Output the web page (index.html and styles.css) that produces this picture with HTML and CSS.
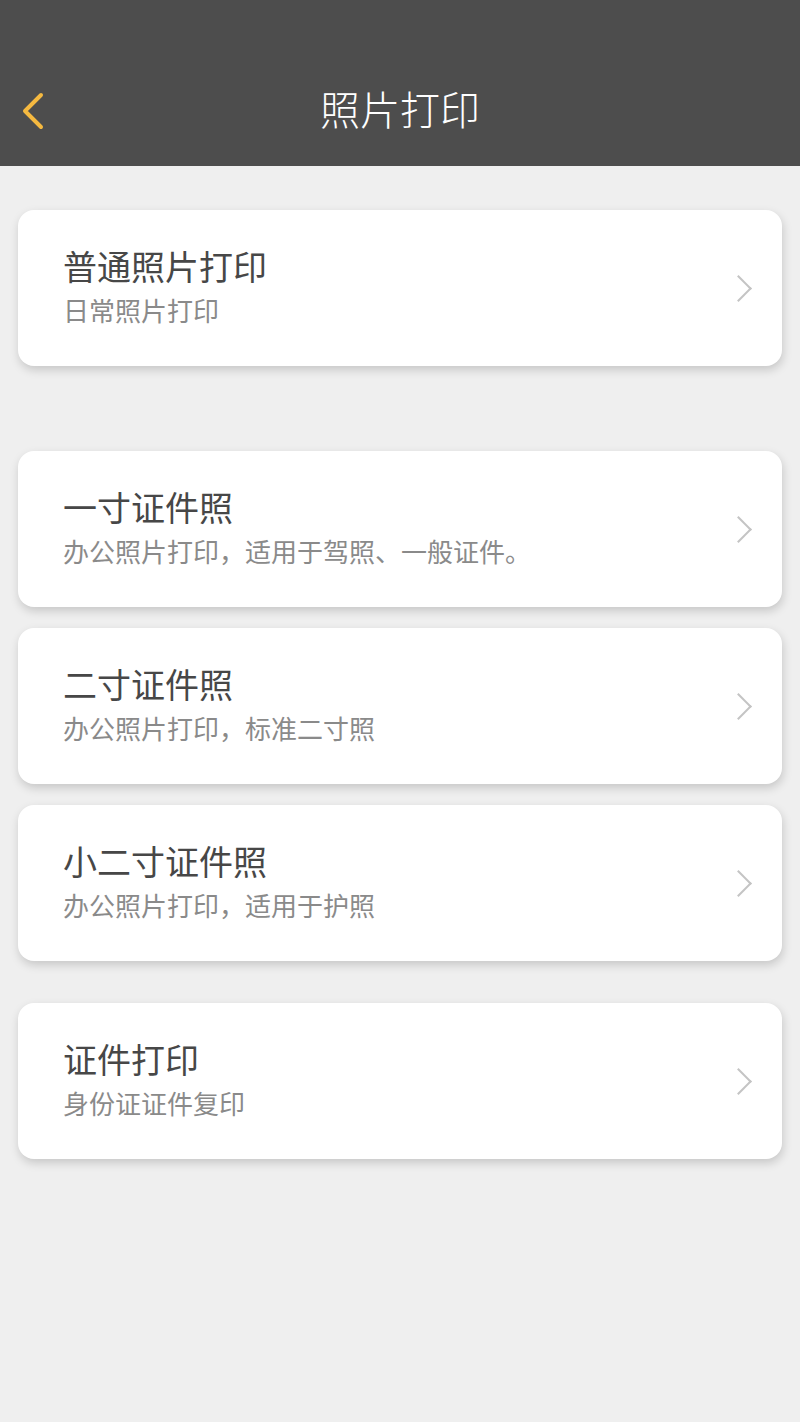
FILE: index.html
```html
<!DOCTYPE html>
<html lang="zh-CN">

<head>
    <meta charset="UTF-8">
    <meta name="viewport" content="width=device-width, initial-scale=1.0">
    <title>照片打印</title>
    <link rel="stylesheet" href="styles.css">
</head>

<body>
    <header class="top-bar">
        <div class="nav-bar">
            <a href="#back" class="back-btn">
                <svg width="24" height="38" viewBox="0 0 24 38">
                    <path d="M20 3 L4 19 L20 35" fill="none" stroke="#f5b940" stroke-width="4"
                        stroke-linecap="round" stroke-linejoin="round" />
                </svg>
            </a>
            <h1 class="page-title">照片打印</h1>
        </div>
    </header>

    <main class="content">
        <div class="card-group group-first">
            <a href="#normal" class="card">
                <div class="card-text">
                    <div class="card-title">普通照片打印</div>
                    <div class="card-desc">日常照片打印</div>
                </div>
                <span class="arrow"></span>
            </a>
        </div>

        <div class="card-group">
            <a href="#one-inch" class="card">
                <div class="card-text">
                    <div class="card-title">一寸证件照</div>
                    <div class="card-desc">办公照片打印，适用于驾照、一般证件。</div>
                </div>
                <span class="arrow"></span>
            </a>
            <a href="#two-inch" class="card">
                <div class="card-text">
                    <div class="card-title">二寸证件照</div>
                    <div class="card-desc">办公照片打印，标准二寸照</div>
                </div>
                <span class="arrow"></span>
            </a>
            <a href="#small-two-inch" class="card">
                <div class="card-text">
                    <div class="card-title">小二寸证件照</div>
                    <div class="card-desc">办公照片打印，适用于护照</div>
                </div>
                <span class="arrow"></span>
            </a>
        </div>

        <div class="card-group group-last">
            <a href="#id-copy" class="card">
                <div class="card-text">
                    <div class="card-title">证件打印</div>
                    <div class="card-desc">身份证证件复印</div>
                </div>
                <span class="arrow"></span>
            </a>
        </div>
    </main>
</body>

</html>
```

FILE: styles.css
```css
/* Reset styles */
* {
    margin: 0;
    padding: 0;
    box-sizing: border-box;
}

body {
    background-color: #efefef;
    font-family: "Noto Sans CJK SC", "Noto Sans", sans-serif;
    min-height: 1422px;
}

a {
    text-decoration: none;
}

/* Header styles */
.top-bar {
    background-color: #4d4d4d;
    height: 166px;
    padding-top: 55px;
}

.nav-bar {
    position: relative;
    height: 111px;
    display: flex;
    align-items: center;
    justify-content: center;
}

.back-btn {
    position: absolute;
    left: 21px;
    top: 37px;
    display: block;
    width: 24px;
    height: 38px;
}

.back-btn svg {
    display: block;
}

.page-title {
    color: #fff;
    font-size: 40px;
    font-weight: 300;
    line-height: 44px;
    margin-top: -6px;
}

/* Card list */
.content {
    padding: 44px 18px 0;
}

.card-group {
    display: flex;
    flex-direction: column;
    gap: 21px;
}

.group-first {
    margin-bottom: 85px;
}

.group-last {
    margin-top: 42px;
}

.card {
    display: flex;
    align-items: center;
    height: 156px;
    padding: 0 30px 0 45px;
    background-color: #fff;
    border-radius: 16px;
    box-shadow: 1px 4px 10px rgba(0, 0, 0, 0.17);
}

.card-text {
    flex: 1;
    margin-top: -4px;
}

.card-title {
    color: #474747;
    font-size: 34px;
    line-height: 40px;
}

.card-desc {
    color: #8a8a8a;
    font-size: 26px;
    line-height: 32px;
    margin-top: 8px;
}

/* right chevron */
.arrow {
    width: 19px;
    height: 19px;
    border-top: 2px solid #c4c4c4;
    border-right: 2px solid #c4c4c4;
    transform: rotate(45deg);
    margin-right: 4px;
}
```
